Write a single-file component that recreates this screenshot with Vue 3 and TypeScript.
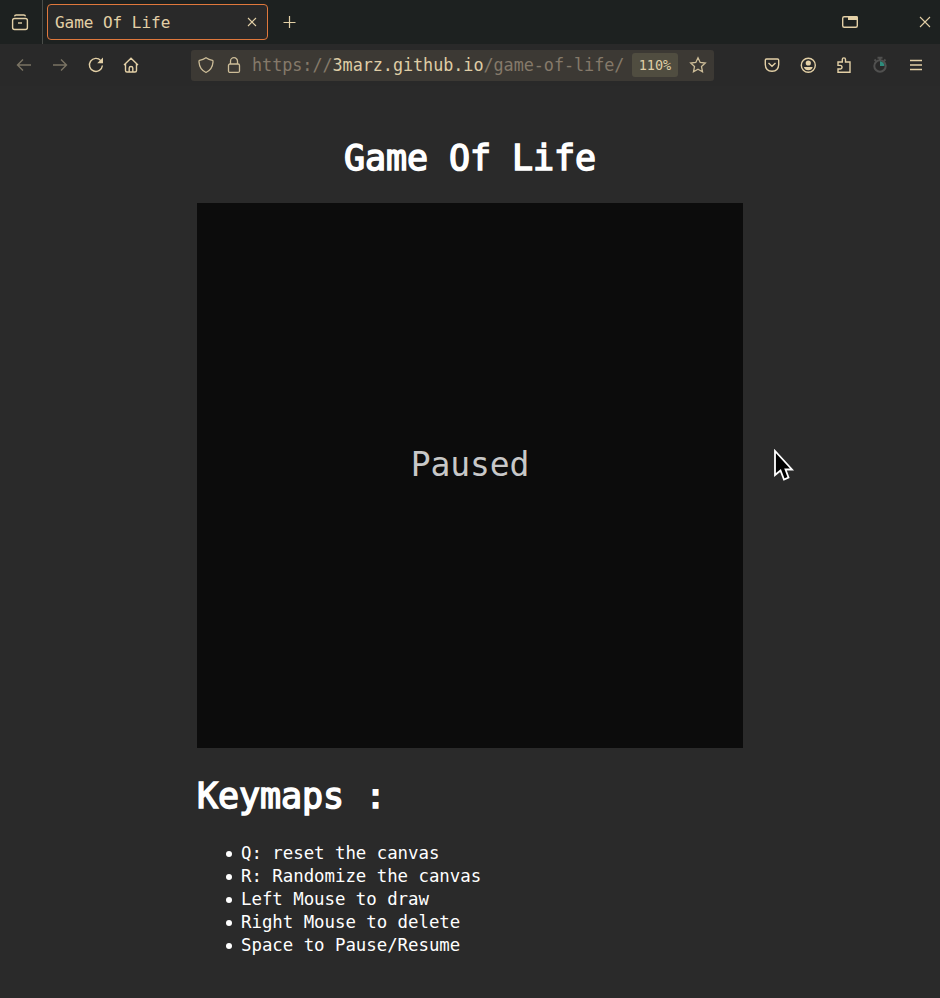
<script setup lang="ts">
const title: string = 'Game Of Life'
const keymaps: string[] = [
  'Q: reset the canvas',
  'R: Randomize the canvas',
  'Left Mouse to draw',
  'Right Mouse to delete',
  'Space to Pause/Resume',
]
</script>

<template>
  <div class="window">
    <header class="tabs">
      <div class="overview">
        <svg width="20" height="20" viewBox="0 0 20 20">
          <path d="M4.5 4.4Q4.800 3 6.200 3H13.800Q15.200 3 15.500 4.400" />
          <rect x="2.600" y="6.500" width="14.800" height="11" rx="2" />
          <path d="M8 11H12" />
        </svg>
      </div>
      <div class="tab">
        <span class="tab-title">{{ title }}</span>
        <svg width="10" height="10" viewBox="0 0 10 10"><path d="M1 1L9 9M9 1L1 9" /></svg>
      </div>
      <svg class="plus" width="14" height="14" viewBox="0 0 14 14"><path d="M6.500 1V13M0.500 7.500H12.500" /></svg>
      <svg class="restore" width="18" height="14" viewBox="0 0 18 14">
        <rect x="1.700" y="1.700" width="14.600" height="10.600" rx="1.500" />
        <path class="fill" d="M7 1H15.500Q17 1 17 2.500V5H7Z" />
      </svg>
      <svg class="close" width="12" height="12" viewBox="0 0 12 12"><path d="M1 1L11 11M11 1L1 11" /></svg>
    </header>

    <nav class="bar">
      <div class="nav-icons">
        <svg class="dim" width="18" height="18" viewBox="0 0 18 18"><path d="M16 9H2.500M8 3.500L2.500 9L8 14.500" /></svg>
        <svg class="dim" width="18" height="18" viewBox="0 0 18 18"><path d="M2 9H15.500M10 3.500L15.500 9L10 14.500" /></svg>
        <svg width="18" height="18" viewBox="0 0 18 18">
          <path d="M13.800 4.600A6.500 6.500 0 1 0 15.400 9.500" />
          <path class="fill" d="M16 1.500V7.300H10.200Z" />
        </svg>
        <svg class="home" width="18" height="18" viewBox="0 0 18 18">
          <path d="M2 9L9 2.200L16 9M3.500 8V14.500Q3.500 16 5 16H13Q14.500 16 14.500 14.500V8M7.200 16V12Q7.200 10.500 9 10.500Q10.800 10.500 10.800 12V16" />
        </svg>
      </div>
      <div class="url">
        <svg width="18" height="18" viewBox="0 0 18 18">
          <path d="M9 1.700Q11.800 3.700 15.500 4.300Q16.200 4.600 16 6Q15.500 13.500 9 16.500Q2.500 13.500 2 6Q1.800 4.600 2.500 4.300Q6.200 3.700 9 1.700Z" />
        </svg>
        <svg class="lock" width="18" height="18" viewBox="0 0 18 18">
          <rect x="3.500" y="8" width="11" height="8.400" rx="1.500" />
          <path d="M5.500 8V5.200A3.500 3.500 0 0 1 12.500 5.200V8" />
        </svg>
        <span class="address">https://<b>3marz.github.io</b>/game-of-life/</span>
        <span class="zoom">110%</span>
        <svg class="star" width="18" height="18" viewBox="0 0 18 18">
          <path d="M9 1.800L11.200 6.500L16.300 7.100L12.500 10.600L13.500 15.800L9 13.200L4.500 15.800L5.500 10.600L1.700 7.100L6.800 6.500Z" />
        </svg>
      </div>
      <div class="actions">
        <svg width="18" height="18" viewBox="0 0 18 18">
          <path d="M3.500 3H14.500Q15.700 3 15.700 4.200V8.500Q15.500 15 9 15.300Q2.500 15 2.300 8.500V4.200Q2.300 3 3.500 3ZM5.500 7L9 10.200L12.500 7" />
        </svg>
        <svg width="18" height="18" viewBox="0 0 18 18">
          <circle cx="9.300" cy="9.300" r="7" />
          <circle class="fill" cx="9.300" cy="7" r="2.600" />
          <path class="fill" d="M4.900 11H13.700Q12.800 14.300 9.300 14.300Q5.800 14.300 4.900 11Z" />
        </svg>
        <svg width="18" height="18" viewBox="0 0 18 18">
          <path d="M3 6H7.300V3.500A1.600 1.600 0 0 1 10.500 3.500V6H15V16.300H3V13H5.200A1.800 1.800 0 0 0 5.200 9.400H3Z" />
        </svg>
        <svg class="timer" width="18" height="18" viewBox="0 0 18 18">
          <circle cx="9" cy="10" r="5.700" />
          <path d="M6.500 1.700H11.500M9 2V4M3.500 3.500L5 5M14.500 3.500L13 5" />
          <path class="wedge" d="M9 5.200A4.600 4.600 0 0 1 13.400 10H9Z" />
        </svg>
        <svg width="18" height="18" viewBox="0 0 18 18"><path d="M3 4.500H15M3 9H15M3 13.500H15" /></svg>
      </div>
    </nav>

    <main class="page">
      <h1>{{ title }}</h1>
      <div class="board"><span>Paused</span></div>
      <h2>Keymaps :</h2>
      <ul>
        <li v-for="item in keymaps" :key="item">{{ item }}</li>
      </ul>
    </main>

    <svg class="cursor" width="24" height="36" viewBox="0 0 24 36">
      <path d="M2 2V26L7.500 21.500L11 30.500L15.500 28.500L12.500 20.500H19Z" />
    </svg>
  </div>
</template>

<style>
body {
  margin: 0;
  background: #2a2a2a;
}
</style>

<style scoped>
.window {
  position: relative;
  width: 940px;
  height: 998px;
  overflow: hidden;
  background: #2a2a2a;
  font-family: 'DejaVu Sans Mono', 'Liberation Mono', monospace;
  color: #fff;
}
svg {
  display: block;
  flex: none;
  fill: none;
  stroke: #e3d0a6;
  stroke-width: 1.4;
}
.fill {
  fill: #e3d0a6;
  stroke: none;
}
.tabs {
  display: flex;
  align-items: center;
  height: 44px;
  background: #1d2120;
}
.overview {
  display: flex;
  align-items: center;
  box-sizing: border-box;
  width: 43px;
  height: 44px;
  padding-left: 10px;
  border-right: 1px solid #4a4d49;
}
.tab {
  display: flex;
  align-items: center;
  justify-content: space-between;
  box-sizing: border-box;
  width: 221px;
  height: 36px;
  margin-left: 4px;
  padding: 0 10px 0 7px;
  background: #292929;
  border: 1px solid #e0783c;
  border-radius: 4px;
}
.tab-title {
  padding-top: 2px;
  color: #e3d0a6;
  font-size: 16px;
  line-height: 32px;
  letter-spacing: -0.03px;
  white-space: pre;
}
.tab svg,
.close {
  stroke-width: 1.1;
}
.plus {
  margin-left: 15px;
  stroke-width: 1.2;
}
.restore {
  margin-left: auto;
}
.close {
  margin: 0 9px 0 60px;
}
.bar {
  display: flex;
  align-items: center;
  height: 42px;
  background: #292929;
}
.nav-icons {
  display: flex;
  gap: 18px;
  padding-left: 15px;
}
.home {
  margin-left: -1px;
  margin-right: 1px;
}
.dim {
  stroke: #7a7363;
}
.url {
  display: flex;
  align-items: center;
  box-sizing: border-box;
  width: 523px;
  height: 31px;
  margin-left: 50px;
  padding-left: 6px;
  background: #3c3934;
  border-radius: 3px;
}
.url svg {
  stroke: #cdbd98;
  stroke-width: 1.3;
}
.url .lock {
  margin-left: 10px;
}
.address {
  width: 373px;
  margin-left: 9px;
  color: #85796a;
  font-size: 16.800px;
  letter-spacing: -0.040px;
  line-height: 31px;
  white-space: pre;
}
.address b {
  color: #dfcda6;
  font-weight: 400;
}
.zoom {
  width: 46px;
  height: 24px;
  margin-left: 7px;
  background: #504d40;
  border-radius: 3px;
  color: #dfcda6;
  font-size: 13.500px;
  line-height: 24px;
  text-align: center;
}
.url .star {
  margin-left: 11px;
}
.actions {
  display: flex;
  gap: 18px;
  margin-left: 49px;
}
.timer {
  stroke: #50504f;
  stroke-width: 2;
}
.wedge {
  fill: #2e8c7c;
  stroke: none;
}
.page {
  width: 546px;
  margin: 0 auto;
  padding-top: 49px;
}
h1,
h2 {
  margin: 0;
  font-size: 35px;
  font-weight: 400;
  line-height: 46px;
  letter-spacing: -0.070px;
  white-space: pre;
  -webkit-text-stroke: 1.500px #fff;
}
h1 {
  text-align: center;
}
.board {
  display: flex;
  align-items: center;
  justify-content: center;
  height: 545px;
  margin-top: 22px;
  background: #0c0c0c;
  color: #c8c8c8;
  font-size: 33px;
  line-height: 40px;
}
.board span {
  padding-bottom: 22px;
  letter-spacing: -0.100px;
}
h2 {
  margin-top: 25px;
}
ul {
  margin: 23px 0 0;
  padding: 0;
  list-style: none;
}
li {
  display: flex;
  align-items: center;
  height: 23px;
  padding-left: 29px;
  font-size: 17.400px;
  line-height: 23px;
  letter-spacing: -0.030px;
  white-space: pre;
}
li::before {
  width: 6px;
  height: 6px;
  margin: 0 9px 0 0;
  border-radius: 50%;
  background: #fff;
  content: '';
}
.cursor {
  position: absolute;
  left: 773px;
  top: 449px;
  fill: #000;
  stroke: #fff;
  stroke-width: 1.800;
}
</style>
